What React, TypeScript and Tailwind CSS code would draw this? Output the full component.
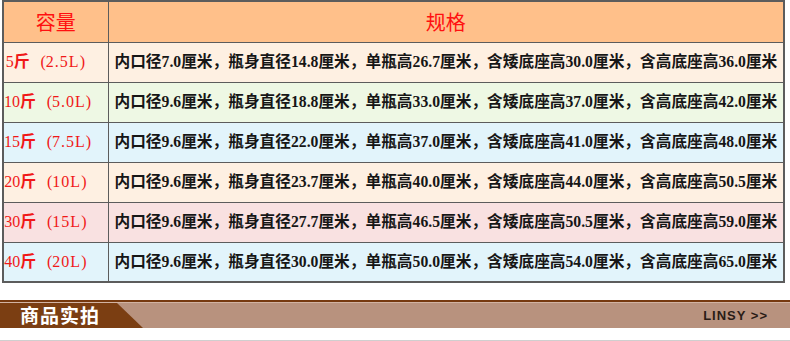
import React from 'react';

const rows = [
  { n: '5', l: '2.5L', bg: 'bg-[#fef0e2]', spec: '内口径7.0厘米，瓶身直径14.8厘米，单瓶高26.7厘米，含矮底座高30.0厘米，含高底座高36.0厘米' },
  { n: '10', l: '5.0L', bg: 'bg-[#eef8e4]', spec: '内口径9.6厘米，瓶身直径18.8厘米，单瓶高33.0厘米，含矮底座高37.0厘米，含高底座高42.0厘米' },
  { n: '15', l: '7.5L', bg: 'bg-[#e2f4fb]', spec: '内口径9.6厘米，瓶身直径22.0厘米，单瓶高37.0厘米，含矮底座高41.0厘米，含高底座高48.0厘米' },
  { n: '20', l: '10L', bg: 'bg-[#fef0e2]', spec: '内口径9.6厘米，瓶身直径23.7厘米，单瓶高40.0厘米，含矮底座高44.0厘米，含高底座高50.5厘米' },
  { n: '30', l: '15L', bg: 'bg-[#f9e1e1]', spec: '内口径9.6厘米，瓶身直径27.7厘米，单瓶高46.5厘米，含矮底座高50.5厘米，含高底座高59.0厘米' },
  { n: '40', l: '20L', bg: 'bg-[#e2f4fb]', spec: '内口径9.6厘米，瓶身直径30.0厘米，单瓶高50.0厘米，含矮底座高54.0厘米，含高底座高65.0厘米' },
];

const serif = 'font-["Liberation_Serif","Noto_Sans_CJK_SC",serif]';

export default function App() {
  return (
    <div className="w-[790px] h-[341px] bg-white overflow-hidden">
      {/* spec table */}
      <table className="ml-[2px] w-[783px] border-collapse border-2 border-[#5c5c5c] table-fixed">
        <thead>
          <tr className="h-[41px] bg-[#ffc08a]">
            <th className="w-[105px] border border-[#5c5c5c] text-[20px] font-normal text-[#ff1010] font-['Noto_Sans_CJK_SC',sans-serif]">
              容量
            </th>
            <th className="border border-[#5c5c5c] text-[20px] font-normal text-[#ff1010] font-['Noto_Sans_CJK_SC',sans-serif]">
              规格
            </th>
          </tr>
        </thead>
        <tbody>
          {rows.map((r) => (
            <tr key={r.n} className={`h-[40px] ${r.bg}`}>
              <td className={`border border-[#5c5c5c] pr-[10px] text-center text-[16px] text-[#f01818] whitespace-nowrap ${serif}`}>
                {r.n}
                <span className="font-bold">斤</span>
                <span className="inline-block w-[16px] text-right">(</span>
                <span className="tracking-[1px]">{r.l}</span>
                <span className="inline-block w-[16px] text-left">)</span>
              </td>
              <td className={`border border-[#5c5c5c] pl-[6px] text-[15.7px] font-bold text-[#161616] whitespace-nowrap ${serif}`}>
                {r.spec}
              </td>
            </tr>
          ))}
        </tbody>
      </table>

      {/* section title bar */}
      <div className="mt-[17px] border-t-2 border-[#76390f]">
        <div className="flex h-[26px] items-center bg-[#b8927e] border-t border-[#d2b3a2]">
          <div className="flex h-full w-[143px] items-center bg-[#7b3e12] pl-[20px] [clip-path:polygon(0_0,117px_0,143px_100%,0_100%)]">
            <span className="text-[19px] font-bold text-white tracking-[1px] font-['Noto_Sans_CJK_SC',sans-serif]">
              商品实拍
            </span>
          </div>
          <span className="ml-auto mr-[22px] text-[13px] font-bold text-[#2a1c16] tracking-[1px] font-['Liberation_Sans',sans-serif]">
            LINSY &gt;&gt;
          </span>
        </div>
        <div className="mt-[12px] h-[2px] bg-[#cfcfcf]" />
      </div>
    </div>
  );
}
